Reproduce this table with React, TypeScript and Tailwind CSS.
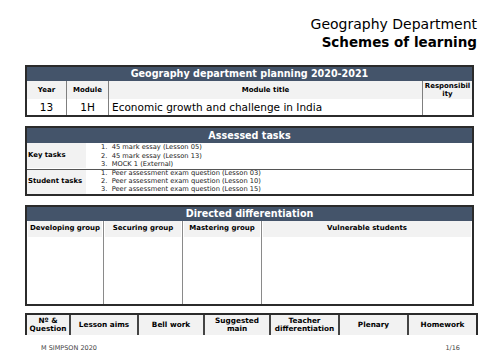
import React from "react";

const HB = "bg-[#44546a]";

export default function App() {
  return (
    <div className="w-[500px] h-[353px] bg-white overflow-hidden text-black" style={{ fontFamily: '"DejaVu Sans", sans-serif' }}>
      <div className="pt-[15px] pr-[23px] text-right">
        <div className="text-[14px] leading-[18px]">Geography Department</div>
        <div className="text-[13.5px] leading-[18px] font-bold">Schemes of learning</div>
      </div>

      {/* Table 1 */}
      <div className="mt-[14px] ml-[25px] w-[449px] border-2 border-[#2b2b2b]">
        <div className={`${HB} h-[14px] text-white font-bold text-[9.6px] leading-[14px] text-center`}>
          Geography department planning 2020-2021
        </div>
        <div className="grid grid-cols-[40px_42px_314px_1fr]">
          <div className="h-[18px] bg-[#f2f2f2] border-r border-[#7f7f7f] text-[7px] font-bold flex items-center justify-center">Year</div>
          <div className="h-[18px] bg-[#f2f2f2] border-r border-[#7f7f7f] text-[7px] font-bold flex items-center justify-center">Module</div>
          <div className="h-[18px] bg-[#f2f2f2] border-r border-[#7f7f7f] text-[7px] font-bold flex items-center justify-center">Module title</div>
          <div className="h-[18px] bg-[#f2f2f2] text-[7px] font-bold leading-[8px] text-center pt-[1px] whitespace-nowrap">Responsibil<br />ity</div>
          <div className="h-[16px] border-r border-[#7f7f7f] text-[10.5px] leading-[16px] text-center">13</div>
          <div className="h-[16px] border-r border-[#7f7f7f] text-[10.5px] leading-[16px] text-center">1H</div>
          <div className="h-[16px] border-r border-[#7f7f7f] text-[10.5px] leading-[16px] pl-[3px] whitespace-nowrap">Economic growth and challenge in India</div>
          <div className="h-[16px]"></div>
        </div>
      </div>

      {/* Table 2 */}
      <div className="mt-[9px] ml-[25px] w-[449px] border-2 border-[#2b2b2b]">
        <div className={`${HB} h-[15px] text-white font-bold text-[9.6px] leading-[15px] text-center`}>Assessed tasks</div>
        <div className="grid grid-cols-[59px_1fr] border-b border-[#555]">
          <div className="bg-[#f2f2f2] text-[6.9px] font-bold flex items-center pl-[1px] h-[25px]">Key tasks</div>
          <ol className="text-[6.7px] leading-[8.5px] pl-[15px] text-[#222]">
            <li>1.&nbsp;&nbsp;45 mark essay (Lesson 05)</li>
            <li>2.&nbsp;&nbsp;45 mark essay (Lesson 13)</li>
            <li>3.&nbsp;&nbsp;MOCK 1 (External)</li>
          </ol>
        </div>
        <div className="grid grid-cols-[59px_1fr]">
          <div className="bg-[#f2f2f2] text-[6.9px] font-bold flex items-center pl-[1px] h-[24px]">Student tasks</div>
          <ol className="text-[6.7px] leading-[8.3px] pl-[15px] -mt-[1px] text-[#222]">
            <li>1.&nbsp;&nbsp;Peer assessment exam question (Lesson 03)</li>
            <li>2.&nbsp;&nbsp;Peer assessment exam question (Lesson 10)</li>
            <li>3.&nbsp;&nbsp;Peer assessment exam question (Lesson 15)</li>
          </ol>
        </div>
      </div>

      {/* Table 3 */}
      <div className="mt-[9px] ml-[25px] w-[449px] border-2 border-[#2b2b2b]">
        <div className={`${HB} h-[14px] text-white font-bold text-[9.6px] leading-[14px] text-center`}>Directed differentiation</div>
        <div className="grid grid-cols-[77px_79px_79px_1fr] h-[83px]">
          {["Developing group", "Securing group", "Mastering group", "Vulnerable students"].map((t, i) => (
            <div key={t} className={`flex flex-col ${i < 3 ? "border-r border-[#8a8a8a]" : ""}`}>
              <div className="h-[16px] bg-[#f2f2f2] mx-[1px] text-[7px] font-bold flex items-center justify-center whitespace-nowrap">{t}</div>
            </div>
          ))}
        </div>
      </div>

      {/* Table 4 */}
      <div className="mt-[7px] ml-[25px] w-[453px] border-t-2 border-x-2 border-[#2b2b2b] h-[22px] grid grid-cols-[44px_68px_66px_66px_69px_69px_1fr]">
        {["Nº &\nQuestion", "Lesson aims", "Bell work", "Suggested\nmain", "Teacher\ndifferentiation", "Plenary", "Homework"].map((t, i) => (
          <div key={t} className={`bg-[#f2f2f2] text-[7.3px] font-bold leading-[8px] flex items-center justify-center text-center whitespace-pre ${i < 6 ? "border-r-2 border-[#444]" : ""}`}>
            {t}
          </div>
        ))}
      </div>

      <div className="mt-[9px] ml-[41px] mr-[40px] flex justify-between text-[6.5px] text-[#444]">
        <span>M SIMPSON 2020</span>
        <span>1/16</span>
      </div>
    </div>
  );
}
